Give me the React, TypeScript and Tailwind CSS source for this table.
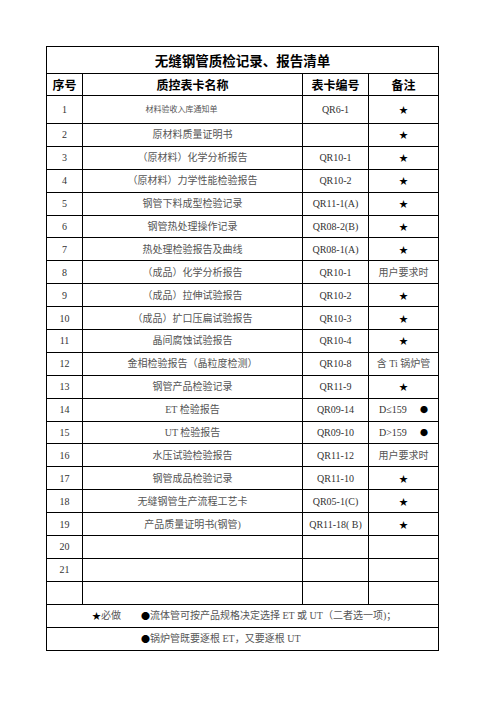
import React from "react";

// ─── Data ──────────────────────────────────────────────────────────────────────

type Row = {
  no: string;
  name: string;
  code: string;
  note: string;
};

const ROWS: Row[] = [
  { no: "2", name: "原材料质量证明书", code: "", note: "★" },
  { no: "3", name: "（原材料）化学分析报告", code: "QR10-1", note: "★" },
  { no: "4", name: "（原材料）力学性能检验报告", code: "QR10-2", note: "★" },
  { no: "5", name: "钢管下料成型检验记录", code: "QR11-1(A)", note: "★" },
  { no: "6", name: "钢管热处理操作记录", code: "QR08-2(B)", note: "★" },
  { no: "7", name: "热处理检验报告及曲线", code: "QR08-1(A)", note: "★" },
  { no: "8", name: "（成品）化学分析报告", code: "QR10-1", note: "用户要求时" },
  { no: "9", name: "（成品）拉伸试验报告", code: "QR10-2", note: "★" },
  { no: "10", name: "（成品）扩口压扁试验报告", code: "QR10-3", note: "★" },
  { no: "11", name: "晶间腐蚀试验报告", code: "QR10-4", note: "★" },
  { no: "12", name: "金相检验报告（晶粒度检测）", code: "QR10-8", note: "含 Ti 锅炉管" },
  { no: "13", name: "钢管产品检验记录", code: "QR11-9", note: "★" },
  { no: "14", name: "ET 检验报告", code: "QR09-14", note: "D≤159" },
  { no: "15", name: "UT 检验报告", code: "QR09-10", note: "D>159" },
  { no: "16", name: "水压试验检验报告", code: "QR11-12", note: "用户要求时" },
  { no: "17", name: "钢管成品检验记录", code: "QR11-10", note: "★" },
  { no: "18", name: "无缝钢管生产流程工艺卡", code: "QR05-1(C)", note: "★" },
  { no: "19", name: "产品质量证明书(钢管)", code: "QR11-18( B)", note: "★" },
  { no: "20", name: "", code: "", note: "" },
  { no: "21", name: "", code: "", note: "" },
  { no: "", name: "", code: "", note: "" },
];

const BODY_FONT = "font-['Liberation_Serif','Noto_Sans_CJK_SC',serif]";
const SYMBOL_FONT = "font-['Noto_Sans_CJK_SC',sans-serif]";

// ─── Cells ─────────────────────────────────────────────────────────────────────

function Note({ note }: { note: string }) {
  if (note === "★") {
    return <span className={`text-[9px] leading-none text-black ${SYMBOL_FONT}`}>★</span>;
  }
  if (note.startsWith("D")) {
    return (
      <div className="flex w-[49px] items-center justify-between text-[10px] text-[#333]">
        <span>{note}</span>
        <span className={`text-[8px] leading-none text-black ${SYMBOL_FONT}`}>●</span>
      </div>
    );
  }
  return <span className="text-[10px] text-[#555]">{note}</span>;
}

function BodyRow({ row }: { row: Row }) {
  const cell = "bg-white h-[21.9px] flex items-center justify-center";
  return (
    <>
      <div className={`${cell} text-[10px] text-[#333]`}>{row.no}</div>
      <div className={`${cell} text-[10px] text-[#555]`}>{row.name}</div>
      <div className={`${cell} text-[10px] text-[#333]`}>{row.code}</div>
      <div className={cell}>{row.note && <Note note={row.note} />}</div>
    </>
  );
}

// ─── Page ──────────────────────────────────────────────────────────────────────

export default function App() {
  return (
    <div className="min-h-[702px] w-[496px] bg-white pt-[46px] pl-[46px]">
      <div
        className={`grid w-[393px] grid-cols-[35px_219px_65px_69px] gap-px bg-black p-px ${BODY_FONT}`}
      >
        {/* Title */}
        <div className={`col-span-4 flex h-[26px] items-center justify-center bg-white text-[13.5px] font-bold text-black ${SYMBOL_FONT}`}>
          无缝钢管质检记录、报告清单
        </div>

        {/* Header */}
        {["序号", "质控表卡名称", "表卡编号", "备注"].map(h => (
          <div
            key={h}
            className={`flex h-[21px] items-center justify-center bg-white text-[12px] font-bold text-black ${SYMBOL_FONT}`}
          >
            {h}
          </div>
        ))}

        {/* Row 1 is taller, with a smaller name */}
        <div className="flex h-[27px] items-center justify-center bg-white text-[10px] text-[#333]">1</div>
        <div className="flex h-[27px] items-center justify-center bg-white pr-[22px] text-[8px] text-[#555]">
          材料验收入库通知单
        </div>
        <div className="flex h-[27px] items-center justify-center bg-white text-[10px] text-[#333]">QR6-1</div>
        <div className="flex h-[27px] items-center justify-center bg-white">
          <Note note="★" />
        </div>

        {ROWS.map((r, i) => (
          <BodyRow key={i} row={r} />
        ))}

        {/* Footer notes */}
        <div className="col-span-4 flex h-[22px] items-center bg-white pl-[45px] text-[10px] text-[#555]">
          <span className="flex w-[49px] items-center">
            <span className={`text-[9px] leading-none text-black ${SYMBOL_FONT}`}>★</span>必做
          </span>
          <span className="flex items-center">
            <span className={`text-[9px] leading-none text-black ${SYMBOL_FONT}`}>●</span>
            流体管可按产品规格决定选择 ET 或 UT（二者选一项)；
          </span>
        </div>
        <div className="col-span-4 flex h-[22px] items-center bg-white pl-[94px] text-[10px] text-[#555]">
          <span className={`text-[9px] leading-none text-black ${SYMBOL_FONT}`}>●</span>
          锅炉管既要逐根 ET，又要逐根 UT
        </div>
      </div>
    </div>
  );
}
